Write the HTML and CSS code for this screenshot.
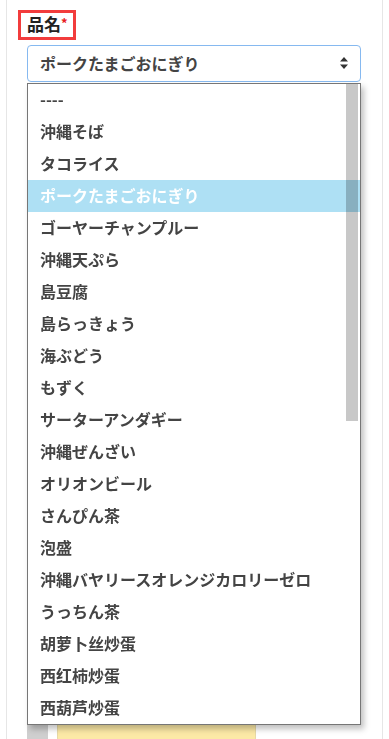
FILE: index.html
```html
<!DOCTYPE html>
<html lang="ja">
<head>
    <meta charset="UTF-8">
    <meta name="viewport" content="width=device-width, initial-scale=1.0">
    <title>品名</title>
    <link rel="stylesheet" href="styles.css">
</head>
<body>
    <div class="panel">
        <div class="field">
            <label class="field-label">品名<span class="req">*</span></label>
            <div class="select-wrap">
                <div class="select-box">
                    <span class="select-value">ポークたまごおにぎり</span>
                    <svg class="select-arrows" viewBox="0 0 8 12" width="8" height="12">
                        <path d="M4 0 L8 4.5 L0 4.5 Z M0 7.5 L8 7.5 L4 12 Z" fill="#333"></path>
                    </svg>
                </div>
                <ul class="options">
                    <li>----</li>
                    <li>沖縄そば</li>
                    <li>タコライス</li>
                    <li class="active">ポークたまごおにぎり</li>
                    <li>ゴーヤーチャンプルー</li>
                    <li>沖縄天ぷら</li>
                    <li>島豆腐</li>
                    <li>島らっきょう</li>
                    <li>海ぶどう</li>
                    <li>もずく</li>
                    <li>サーターアンダギー</li>
                    <li>沖縄ぜんざい</li>
                    <li>オリオンビール</li>
                    <li>さんぴん茶</li>
                    <li>泡盛</li>
                    <li>沖縄バヤリースオレンジカロリーゼロ</li>
                    <li>うっちん茶</li>
                    <li>胡萝卜丝炒蛋</li>
                    <li>西红柿炒蛋</li>
                    <li>西葫芦炒蛋</li>
                    <li class="thumb" aria-hidden="true"></li>
                </ul>
            </div>
        </div>
        <div class="actions">
            <span class="btn-gray"></span>
            <span class="btn-yellow"></span>
        </div>
    </div>
</body>
</html>
```

FILE: styles.css
```css
* { box-sizing: border-box; }

body {
    margin: 0;
    background: #ffffff;
    font-family: "Noto Sans CJK JP", "Noto Sans", sans-serif;
    color: #444;
}

.panel {
    margin-left: 6px;
    width: 377px;
    height: 739px;
    border-left: 1px solid #e6e6e6;
    border-right: 1px solid #e6e6e6;
    padding: 10px 0 0 11px;
    overflow: hidden;
}

.field-label {
    display: inline-block;
    border: 3px solid #f23c3c;
    padding: 0 5px 0 6px;
    height: 30px;
    line-height: 22px;
    font-size: 17px;
    font-weight: bold;
    color: #222;
}
.req {
    color: #e82020;
    font-size: 13px;
    vertical-align: top;
    position: relative;
    top: -1px;
}

.select-wrap {
    position: relative;
    margin: 5px 0 0 9px;
    width: 334px;
}

.select-box {
    display: flex;
    align-items: center;
    justify-content: space-between;
    height: 37px;
    padding: 0 12px 2px 12px;
    border: 1px solid #86b9f0;
    border-radius: 4px;
    background: #fff;
}
.select-value {
    font-size: 16px;
    font-weight: bold;
    color: #444;
    line-height: 1;
}
.select-arrows { display: block; }

.options {
    position: absolute;
    top: 38px;
    left: 0;
    width: 334px;
    margin: 0;
    padding: 0;
    list-style: none;
    background: #fff;
    border: 1px solid #767676;
    box-shadow: 3px 4px 6px rgba(0, 0, 0, 0.25);
    z-index: 2;
}
.options li {
    height: 32px;
    line-height: 30px;
    padding-left: 12px;
    font-size: 16px;
    font-weight: bold;
    color: #444;
    white-space: nowrap;
}
.options li.active {
    background: #aee0f4;
    color: #fff;
}
.options .thumb {
    position: absolute;
    top: 0;
    right: 2px;
    width: 12px;
    height: 337px;
    padding: 0;
    background: #c8c8c8;
    mix-blend-mode: multiply;
}

.actions {
    display: flex;
    gap: 9px;
    margin: 634px 0 0 9px;
}
.btn-gray {
    width: 21px;
    height: 30px;
    background: #cfcfcf;
}
.btn-yellow {
    width: 199px;
    height: 30px;
    border: 1px solid #e6d9a6;
    border-radius: 8px;
    background: #fce9a6;
}
```
